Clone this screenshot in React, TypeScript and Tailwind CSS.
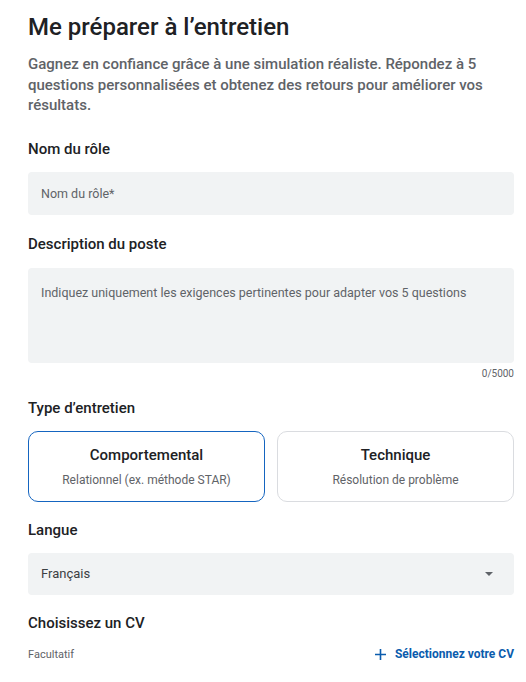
import React, { useState } from "react";

const Label = ({ children }: { children: React.ReactNode }) => (
    <h2 className="text-[15px] font-medium text-[#202124] leading-5">{children}</h2>
);

const TypeCard = ({
    title,
    subtitle,
    active,
    onClick,
}: {
    title: string;
    subtitle: string;
    active: boolean;
    onClick: () => void;
}) => (
    <button
        onClick={onClick}
        className={
            "flex-1 h-[71px] rounded-[10px] border flex flex-col items-center justify-center gap-[7px] bg-white " +
            (active ? "border-[#1565c0]" : "border-[#dadce0]")
        }
    >
        <span className="text-[15px] font-medium text-[#202124] leading-5">{title}</span>
        <span className="text-[12px] text-[#5f6368] leading-4">{subtitle}</span>
    </button>
);

export default function App() {
    const [type, setType] = useState("comportemental");

    return (
        <div className="bg-white min-h-screen pl-[28px] pr-[12px] pt-[12px] font-['Roboto',sans-serif]">
            <h1 className="text-[24px] font-medium text-[#202124] leading-[30px]">
                Me préparer à l’entretien
            </h1>
            <p className="mt-[12px] text-[15px] font-medium text-[#5f6368] leading-[20.5px]">
                Gagnez en confiance grâce à une simulation réaliste. Répondez à 5 questions
                personnalisées et obtenez des retours pour améliorer vos résultats.
            </p>

            <div className="mt-[23px]">
                <Label>Nom du rôle</Label>
                <input
                    placeholder="Nom du rôle*"
                    className="mt-[13px] w-full h-[43px] rounded bg-[#f1f3f4] px-[13px] text-[12.5px] placeholder:text-[#5f6368] outline-none"
                />
            </div>

            <div className="mt-[19px]">
                <Label>Description du poste</Label>
                <textarea
                    placeholder="Indiquez uniquement les exigences pertinentes pour adapter vos 5 questions"
                    className="mt-[14px] block w-full h-[95px] rounded bg-[#f1f3f4] px-[13px] py-[17px] text-[12.5px] leading-4 placeholder:text-[#5f6368] outline-none resize-none"
                />
                <div className="mt-[5px] text-right text-[10px] text-[#5f6368] leading-3">0/5000</div>
            </div>

            <div className="mt-[18px]">
                <Label>Type d’entretien</Label>
                <div className="mt-[13px] flex gap-[12px]">
                    <TypeCard
                        title="Comportemental"
                        subtitle="Relationnel (ex. méthode STAR)"
                        active={type === "comportemental"}
                        onClick={() => setType("comportemental")}
                    />
                    <TypeCard
                        title="Technique"
                        subtitle="Résolution de problème"
                        active={type === "technique"}
                        onClick={() => setType("technique")}
                    />
                </div>
            </div>

            <div className="mt-[18px]">
                <Label>Langue</Label>
                <div className="mt-[13px] h-[42px] rounded bg-[#f1f3f4] px-[13px] flex items-center justify-between">
                    <span className="text-[13px] text-[#3c4043]">Français</span>
                    <svg width="8" height="4" viewBox="0 0 8 4" className="mr-[8px]">
                        <path d="M0 0 L8 0 L4 4 Z" fill="#5f6368" />
                    </svg>
                </div>
            </div>

            <div className="mt-[18px]">
                <Label>Choisissez un CV</Label>
                <div className="mt-[14px] flex items-center justify-between">
                    <span className="text-[11px] text-[#5f6368]">Facultatif</span>
                    <button className="flex items-center gap-[9px] text-[12px] font-bold text-[#0b5cad] -mt-[2px]">
                        <svg width="11" height="11" viewBox="0 0 11 11" className="mt-[2px]">
                            <path d="M5.5 0 V11 M0 5.5 H11" stroke="#0b5cad" strokeWidth="1.6" />
                        </svg>
                        Sélectionnez votre CV
                    </button>
                </div>
            </div>
        </div>
    );
}
